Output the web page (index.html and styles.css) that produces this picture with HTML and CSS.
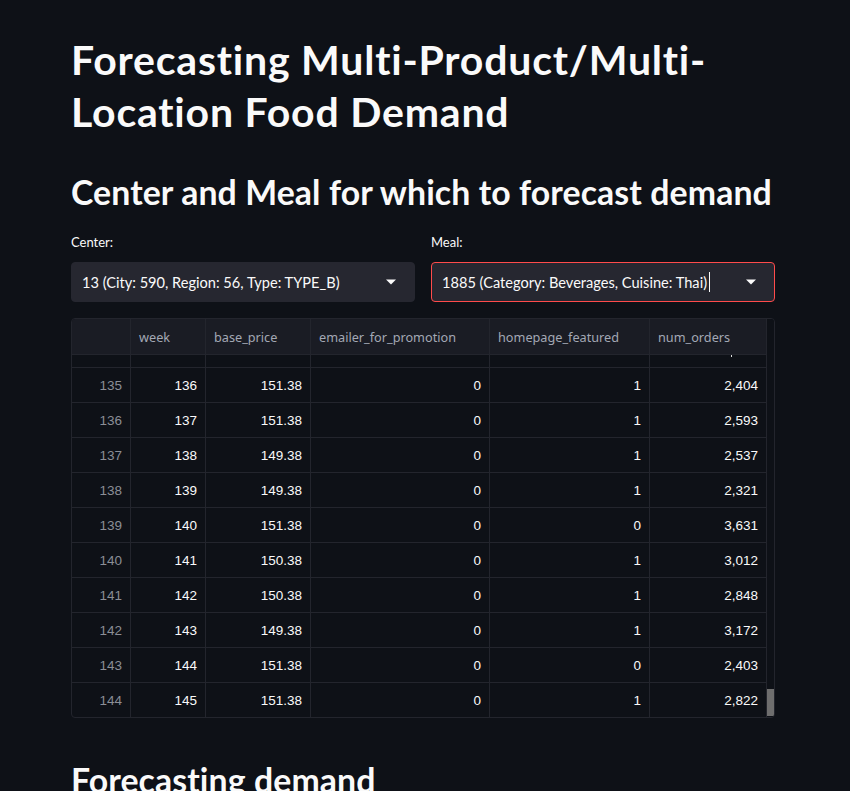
FILE: index.html
```html
<!DOCTYPE html>
<html>
<head>
<meta charset="utf-8">
<link rel="stylesheet" href="styles.css">
</head>
<body>
<main class="page">
  <h1 class="title">Forecasting Multi-Product/Multi-Location Food Demand</h1>
  <h2 class="subtitle">Center and Meal for which to forecast demand</h2>
  <div class="selects">
    <div class="field">
      <label class="label">Center:</label>
      <div class="select">
        <span class="select-value">13 (City: 590, Region: 56, Type: TYPE_B)</span>
        <svg class="caret" width="12" height="8" viewBox="0 0 12 8"><path d="M1 1.5h10L6 6.5z" fill="#fafafa"/></svg>
      </div>
    </div>
    <div class="field">
      <label class="label">Meal:</label>
      <div class="select focused">
        <span class="select-value">1885 (Category: Beverages, Cuisine: Thai)<span class="cursor"></span></span>
        <svg class="caret" width="12" height="8" viewBox="0 0 12 8"><path d="M1 1.5h10L6 6.5z" fill="#fafafa"/></svg>
      </div>
    </div>
  </div>

  <div class="grid">
    <div class="grid-main">
      <div class="row head">
        <div class="cell"></div>
        <div class="cell">week</div>
        <div class="cell">base_price</div>
        <div class="cell">emailer_for_promotion</div>
        <div class="cell">homepage_featured</div>
        <div class="cell">num_orders</div>
      </div>
      <div class="body">
        <div class="partial">
          <div class="cell"></div><div class="cell"></div><div class="cell"></div><div class="cell"></div><div class="cell"></div><div class="cell"><span class="tick"></span></div>
        </div>
        <div class="row"><div class="cell idx">135</div><div class="cell">136</div><div class="cell">151.38</div><div class="cell">0</div><div class="cell">1</div><div class="cell">2,404</div></div>
        <div class="row"><div class="cell idx">136</div><div class="cell">137</div><div class="cell">151.38</div><div class="cell">0</div><div class="cell">1</div><div class="cell">2,593</div></div>
        <div class="row"><div class="cell idx">137</div><div class="cell">138</div><div class="cell">149.38</div><div class="cell">0</div><div class="cell">1</div><div class="cell">2,537</div></div>
        <div class="row"><div class="cell idx">138</div><div class="cell">139</div><div class="cell">149.38</div><div class="cell">0</div><div class="cell">1</div><div class="cell">2,321</div></div>
        <div class="row"><div class="cell idx">139</div><div class="cell">140</div><div class="cell">151.38</div><div class="cell">0</div><div class="cell">0</div><div class="cell">3,631</div></div>
        <div class="row"><div class="cell idx">140</div><div class="cell">141</div><div class="cell">150.38</div><div class="cell">0</div><div class="cell">1</div><div class="cell">3,012</div></div>
        <div class="row"><div class="cell idx">141</div><div class="cell">142</div><div class="cell">150.38</div><div class="cell">0</div><div class="cell">1</div><div class="cell">2,848</div></div>
        <div class="row"><div class="cell idx">142</div><div class="cell">143</div><div class="cell">149.38</div><div class="cell">0</div><div class="cell">1</div><div class="cell">3,172</div></div>
        <div class="row"><div class="cell idx">143</div><div class="cell">144</div><div class="cell">151.38</div><div class="cell">0</div><div class="cell">0</div><div class="cell">2,403</div></div>
        <div class="row"><div class="cell idx">144</div><div class="cell">145</div><div class="cell">151.38</div><div class="cell">0</div><div class="cell">1</div><div class="cell">2,822</div></div>
      </div>
    </div>
    <div class="scrollbar"><div class="thumb"></div></div>
  </div>

  <h2 class="subtitle section">Forecasting demand</h2>
</main>
</body>
</html>
```

FILE: styles.css
```css
html, body {
  margin: 0;
  padding: 0;
  background: #0e1117;
  height: 791px;
  overflow: hidden;
}
body {
  font-family: "Lato", "Noto Sans", sans-serif;
  color: #fafafa;
  font-variant-ligatures: none;
}
.page {
  width: 704px;
  margin-left: 71px;
  padding-top: 34px;
  height: 757px;
  overflow: hidden;
}
.title {
  margin: 0;
  font-size: 41px;
  font-weight: 700;
  line-height: 52px;
  letter-spacing: 0.8px;
}
.subtitle {
  margin: 32px 0 0 0;
  font-size: 33.8px;
  font-weight: 700;
  line-height: 44px;
  letter-spacing: 0.1px;
  white-space: nowrap;
}
.selects {
  display: grid;
  grid-template-columns: 1fr 1fr;
  gap: 16px;
  margin-top: 18px;
}
.field {
  display: flex;
  flex-direction: column;
}
.label {
  font-size: 13px;
  line-height: 20px;
  height: 30px;
  color: #fafafa;
}
.select {
  height: 40px;
  box-sizing: border-box;
  background: #262730;
  border: 1px solid #262730;
  border-radius: 4px;
  display: flex;
  align-items: center;
  justify-content: space-between;
  padding: 0 17px 0 10px;
}
.select.focused {
  border-color: #ff4b4b;
}
.select-value {
  font-size: 14.6px;
  color: #fafafa;
  display: flex;
  align-items: center;
}
.cursor {
  display: inline-block;
  width: 1px;
  height: 20px;
  background: #fafafa;
  margin-left: 2px;
}
.caret {
  display: block;
}
.grid {
  margin-top: 16px;
  display: flex;
  border: 1px solid #23252d;
  border-radius: 4px;
  overflow: hidden;
  height: 400px;
  box-sizing: border-box;
  background: #0e1117;
}
.grid-main {
  width: 694px;
  display: flex;
  flex-direction: column;
}
.row, .partial {
  display: grid;
  grid-template-columns: 59px 75px 105px 179px 160px 116px;
  height: 35px;
  border-bottom: 1px solid #23252d;
  box-sizing: border-box;
  font-family: "Liberation Sans", Arial, sans-serif;
  font-size: 13.5px;
}
.partial {
  height: 13px;
}
.row .cell, .partial .cell {
  border-right: 1px solid #23252d;
  display: flex;
  align-items: center;
  justify-content: flex-end;
  padding: 0 8px;
  color: #fafafa;
}
.row .cell:last-child, .partial .cell:last-child {
  border-right: none;
}
.partial .cell:last-child {
  align-items: flex-start;
  padding-right: 34px;
}
.tick {
  width: 1px;
  height: 2px;
  background: #dcdcdc;
}
.row .cell.idx {
  color: #8b8e96;
}
.row.head {
  background: #1a1c24;
  height: 36px;
  flex: none;
}
.row.head .cell {
  justify-content: flex-start;
  color: #a3a8b4;
  font-family: "Noto Sans", sans-serif;
  font-size: 12.7px;
}
.body {
  flex: 1;
  overflow: hidden;
}
.scrollbar {
  width: 8px;
  border-left: 1px solid #23252d;
  background: #0e1117;
  display: flex;
  flex-direction: column;
  justify-content: flex-end;
}
.thumb {
  height: 27px;
  background: #6e6e6e;
  margin-bottom: 1px;
}
.section {
  margin-top: 40px;
}
```
